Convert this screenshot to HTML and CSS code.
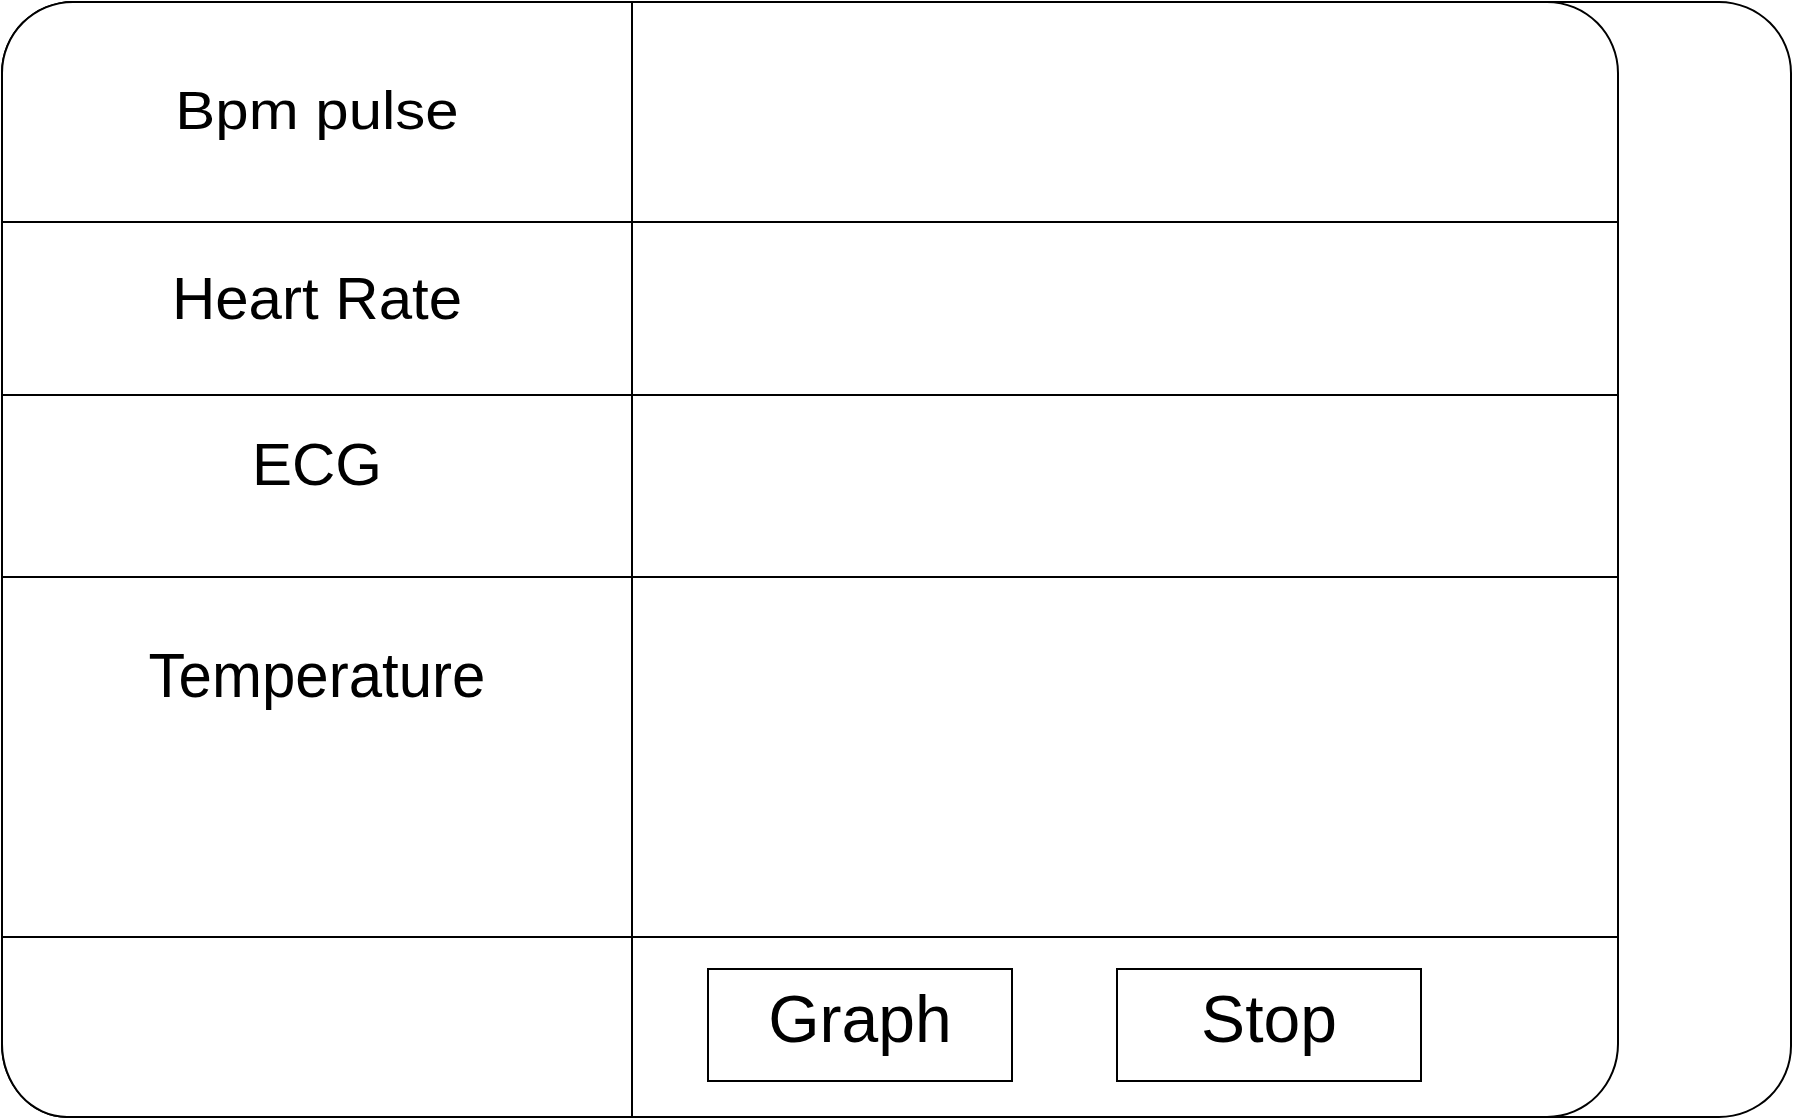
FILE: index.html
```html
<!DOCTYPE html>
<html lang="en">
<head>
<meta charset="utf-8">
<title>Vital signs panel</title>
<link rel="stylesheet" href="styles.css">
</head>
<body>
<div class="frame">
  <div class="table">
    <div class="cell label row-bpm"><span class="txt">Bpm pulse</span></div>
    <div class="cell value"></div>
    <div class="cell label row-heart"><span class="txt">Heart Rate</span></div>
    <div class="cell value"></div>
    <div class="cell label row-ecg"><span class="txt">ECG</span></div>
    <div class="cell value"></div>
    <div class="cell label row-temp"><span class="txt">Temperature</span></div>
    <div class="cell value"></div>
    <div class="cell label last"></div>
    <div class="cell value last actions">
      <div class="btn">Graph</div>
      <div class="btn">Stop</div>
    </div>
  </div>
</div>
</body>
</html>
```

FILE: styles.css
```css
html, body {
  margin: 0;
  padding: 0;
  background: #ffffff;
}

body {
  font-family: "Liberation Sans", Arial, sans-serif;
  color: #000000;
}

.frame {
  box-sizing: border-box;
  margin: 1px 0 0 1px;
  width: 1791px;
  height: 1117px;
  border: 2px solid #000;
  border-radius: 72px 73px 73px 66px / 72px 72px 72px 74px;
  display: flex;
}

.table {
  box-sizing: border-box;
  flex: none;
  margin: -2px 0 -2px -2px;
  width: 1618px;
  height: 1117px;
  border: 2px solid #000;
  border-radius: 72px 72px 72px 66px / 72px 72px 74px 74px;
  display: grid;
  grid-template-columns: 630px 1fr;
  grid-template-rows: 220px 173px 182px 360px 1fr;
  overflow: hidden;
  background: #fff;
}

.cell {
  box-sizing: border-box;
  border-bottom: 2px solid #000;
}

.cell.last {
  border-bottom: none;
}

.label {
  border-right: 2px solid #000;
  text-align: center;
  font-size: 60px;
  line-height: 1;
}

.txt {
  display: inline-block;
  transform-origin: 50% 51px;
}

.row-bpm { padding-top: 76px; }
.row-bpm .txt { transform: scaleY(0.88); }
.row-heart { padding-top: 46px; }
.row-ecg { padding-top: 39px; }
.row-temp { padding-top: 69px; }
.row-temp .txt { transform: scaleY(1.04); }

.actions {
  display: flex;
  align-items: flex-start;
  gap: 103px;
  padding: 30px 0 0 74px;
}

.btn {
  box-sizing: border-box;
  width: 306px;
  height: 114px;
  border: 2px solid #000;
  font-size: 66px;
  line-height: 1;
  display: flex;
  align-items: center;
  justify-content: center;
  padding-bottom: 12px;
}
```
